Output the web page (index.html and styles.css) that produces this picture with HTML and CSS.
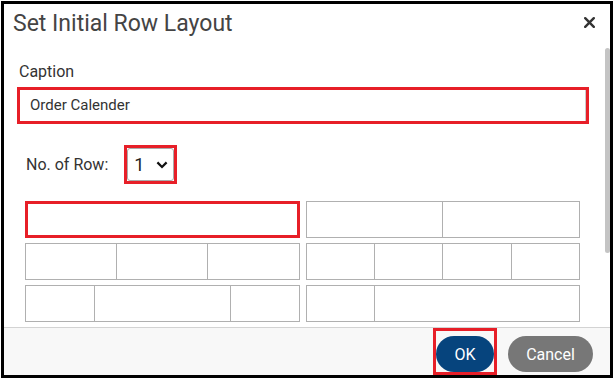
FILE: index.html
```html
<!DOCTYPE html>
<html>
<head>
<meta charset="utf-8">
<link rel="stylesheet" href="styles.css">
</head>
<body>
<div class="dialog">
  <div class="header">
    <h1 class="title">Set Initial Row Layout</h1>
    <svg class="close" width="11" height="11" viewBox="0 0 11 11"><path d="M1.2 1.2 L9.8 9.8 M9.8 1.2 L1.2 9.8" stroke="#333" stroke-width="2.4" stroke-linecap="round"/></svg>
  </div>
  <div class="body">
    <div class="content">
      <div class="label">Caption</div>
      <div class="hl hl-caption"><div class="input">Order Calender</div></div>
      <div class="rowsel">
        <span class="label2">No. of Row:</span>
        <span class="hl hl-select"><span class="select"><span>1</span><svg width="12" height="8" viewBox="0 0 12 8"><path d="M1.4 1.4 L6 6 L10.6 1.4" fill="none" stroke="#111" stroke-width="2.2"/></svg></span></span>
      </div>
      <div class="grid">
        <div class="group"><div class="cell sel" style="flex:1"></div></div>
        <div class="group"><div class="cell" style="flex:1"></div><div class="cell" style="flex:1"></div></div>
        <div class="group"><div class="cell" style="flex:1"></div><div class="cell" style="flex:1"></div><div class="cell" style="flex:1"></div></div>
        <div class="group"><div class="cell" style="flex:1"></div><div class="cell" style="flex:1"></div><div class="cell" style="flex:1"></div><div class="cell" style="flex:1"></div></div>
        <div class="group"><div class="cell" style="flex:1"></div><div class="cell" style="flex:2"></div><div class="cell" style="flex:1"></div></div>
        <div class="group"><div class="cell" style="flex:1"></div><div class="cell" style="flex:3"></div></div>
      </div>
    </div>
    <div class="scrolltrack"><div class="thumb"></div></div>
  </div>
  <div class="footer">
    <span class="hl hl-ok"><button class="btn ok">OK</button></span>
    <button class="btn cancel">Cancel</button>
  </div>
</div>
</body>
</html>
```
FILE: styles.css
```css
html, body { margin: 0; padding: 0; background: #fff; }
body { font-family: Roboto, "Noto Sans", sans-serif; color: #333; }
.dialog {
  margin: 1px 0 0 1px;
  width: 612px;
  height: 377px;
  box-sizing: border-box;
  border: 3px solid #000;
  display: flex;
  flex-direction: column;
  background: #fff;
  box-shadow: 0 3px 0 #9a9a9a;
  overflow: hidden;
}
.header {
  height: 42px;
  flex: none;
  display: flex;
  align-items: flex-start;
  justify-content: space-between;
  padding: 0 15px 0 9px;
}
.title {
  margin: 6px 0 0 0;
  font-size: 23px;
  line-height: 27px;
  font-weight: 400;
  color: #444;
}
.close { margin-top: 13px; }
.body {
  flex: 1;
  display: flex;
  overflow: hidden;
  min-height: 0;
}
.content {
  flex: 1;
  padding: 16px 0 0 13px;
}
.scrolltrack { width: 5px; flex: none; padding-top: 2px; }
.thumb { height: 205px; background: #c4c4c4; border-radius: 3px; }
.label { font-size: 16px; line-height: 19px; padding-left: 2px; color: #333; }
.hl { border: 3px solid #e71f28; box-sizing: border-box; }
.hl-caption { margin-top: 6px; width: 572px; height: 37px; }
.input {
  height: 100%;
  box-sizing: border-box;
  border-right: 1px solid #ccc;
  font-size: 15px;
  line-height: 31px;
  padding-left: 10px;
  color: #333;
}
.rowsel { display: flex; align-items: center; margin-top: 21px; padding-left: 9px; }
.label2 { font-size: 16px; line-height: 19px; color: #333; margin-right: 16px; }
.hl-select { display: inline-flex; width: 53px; height: 39px; }
.select {
  display: flex; align-items: center; justify-content: space-between;
  width: 100%; box-sizing: border-box;
  border: 1px solid #aaa; border-radius: 3px;
  padding: 0 5px 0 6px;
  font-size: 18px; color: #222;
}
.grid {
  margin: 17px 0 0 8px;
  width: 555px;
  display: grid;
  grid-template-columns: 1fr 1fr;
  column-gap: 6px;
  row-gap: 5px;
}
.group { display: flex; height: 37px; border: 1px solid #b0b0b0; box-sizing: border-box; }
.cell { border-left: 1px solid #b0b0b0; }
.cell:first-child { border-left: none; }
.cell.sel { outline: 3px solid #e71f28; outline-offset: -2px; }
.footer {
  height: 48px; flex: none; box-sizing: border-box;
  border-top: 1px solid #d3d3d3;
  background: #f8f8f8;
  display: flex; align-items: flex-start; justify-content: flex-end;
  padding: 0 17px 0 0;
}
.btn {
  border: none; border-radius: 18px; height: 36px;
  font-family: Roboto, sans-serif; font-size: 16px; color: #fff;
  padding: 0;
}
.hl-ok { display: inline-flex; padding: 5px 0 0 0; width: 64px; justify-content: center; height: 47px; margin-right: 11px; }
.ok { background: #06447d; width: 59px; }
.cancel { background: #777; width: 85px; margin-top: 8px; }
```
